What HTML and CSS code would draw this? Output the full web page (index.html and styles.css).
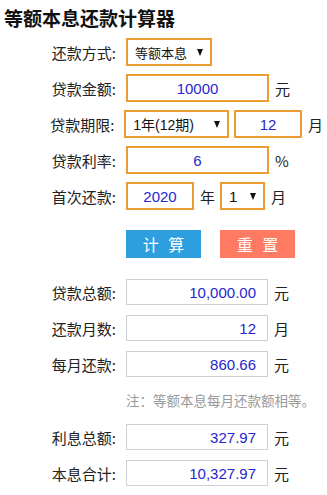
FILE: index.html
```html
<!DOCTYPE html>
<html lang="zh">
<head>
<meta charset="utf-8">
<title>等额本息还款计算器</title>
<link rel="stylesheet" href="styles.css">
</head>
<body>
<h1 class="title">等额本息还款计算器</h1>
<div class="form">
  <div class="row">
    <span class="label">还款方式:</span>
    <div class="sel sel-type"><span>等额本息</span><i class="arrow"></i></div>
  </div>
  <div class="row">
    <span class="label">贷款金额:</span>
    <div class="inp inp-wide">10000</div>
    <span class="unit">元</span>
  </div>
  <div class="row">
    <span class="label">贷款期限:</span>
    <div class="sel sel-term"><span>1年(12期)</span><i class="arrow"></i></div>
    <div class="inp inp-months">12</div>
    <span class="unit">月</span>
  </div>
  <div class="row">
    <span class="label">贷款利率:</span>
    <div class="inp inp-wide">6</div>
    <span class="unit">%</span>
  </div>
  <div class="row">
    <span class="label">首次还款:</span>
    <div class="inp inp-year">2020</div>
    <span class="unit unit-mid">年</span>
    <div class="sel sel-month"><span>1</span><i class="arrow"></i></div>
    <span class="unit">月</span>
  </div>
  <div class="btns">
    <button class="btn btn-calc">计 算</button>
    <button class="btn btn-reset">重 置</button>
  </div>
  <div class="results">
    <div class="row out-row">
      <span class="label">贷款总额:</span>
      <div class="out">10,000.00</div>
      <span class="unit">元</span>
    </div>
    <div class="row out-row">
      <span class="label">还款月数:</span>
      <div class="out">12</div>
      <span class="unit">月</span>
    </div>
    <div class="row out-row">
      <span class="label">每月还款:</span>
      <div class="out">860.66</div>
      <span class="unit">元</span>
    </div>
    <p class="note">注：等额本息每月还款额相等。</p>
    <div class="row out-row">
      <span class="label">利息总额:</span>
      <div class="out">327.97</div>
      <span class="unit">元</span>
    </div>
    <div class="row out-row">
      <span class="label">本息合计:</span>
      <div class="out">10,327.97</div>
      <span class="unit">元</span>
    </div>
  </div>
</div>
</body>
</html>
```
FILE: styles.css
```css
* { box-sizing: border-box; }
html, body { margin: 0; padding: 0; background: #fff; }
body {
  font-family: "Microsoft YaHei", "Noto Sans CJK SC", "Liberation Sans", sans-serif;
  color: #222;
  padding: 0 4px;
}
.title {
  margin: 0;
  padding-top: 6px;
  height: 38px;
  font-size: 19px;
  line-height: 24px;
  font-weight: bold;
  color: #111;
}
.form { display: flex; flex-direction: column; }
.row {
  display: flex;
  align-items: center;
  height: 28px;
  margin-bottom: 8px;
  font-size: 14px;
}
.label {
  width: 112px;
  text-align: right;
  margin-right: 10px;
  font-size: 15px;
  color: #222;
}
.unit { margin-left: 6px; font-size: 15px; color: #222; }
.unit-mid { margin-left: 6px; margin-right: 5px; }
.inp {
  height: 28px;
  border: 2px solid #EB9C33;
  display: flex;
  align-items: center;
  justify-content: center;
  color: #2626d0;
  font-family: "Liberation Sans", "Noto Sans CJK SC", sans-serif;
  font-size: 15px;
}
.inp-wide { width: 143px; }
.inp-months { width: 69px; margin-left: 5px; }
.inp-year { width: 68px; }
.sel {
  height: 28px;
  border: 2px solid #EB9C33;
  display: flex;
  align-items: center;
  justify-content: space-between;
  padding: 0 7px 0 7px;
  font-size: 14px;
  color: #111;
}
.sel-type { width: 86px; font-size: 13px; }
.sel-term { width: 106px; font-family: "Liberation Sans", "Noto Sans CJK SC", sans-serif; }
.sel-month { width: 45px; font-family: "Liberation Sans", sans-serif; font-size: 15px; }
.arrow {
  width: 0;
  height: 0;
  border-left: 3.5px solid transparent;
  border-right: 3.5px solid transparent;
  border-top: 7px solid #111;
}
.btns {
  display: flex;
  gap: 19px;
  margin: 12px 0 21px 122px;
}
.btn {
  width: 75px;
  height: 28px;
  border: 0;
  padding: 0;
  color: #fff;
  font-family: inherit;
  font-size: 16px;
  letter-spacing: 3px;
  text-indent: 3px;
}
.btn-calc { background: #2D9FDF; }
.btn-reset { background: #FF7A62; }
.out-row { height: 26px; margin-bottom: 10px; }
.out {
  width: 142px;
  height: 26px;
  border: 1px solid #cdd1d6;
  display: flex;
  align-items: center;
  justify-content: flex-end;
  padding-right: 11px;
  color: #2626d0;
  font-family: "Liberation Sans", sans-serif;
  font-size: 15px;
}
.out-row .unit { margin-left: 6px; }
.note {
  margin: 0 0 11px 122px;
  height: 26px;
  line-height: 26px;
  font-size: 13.5px;
  color: #999;
}
```
